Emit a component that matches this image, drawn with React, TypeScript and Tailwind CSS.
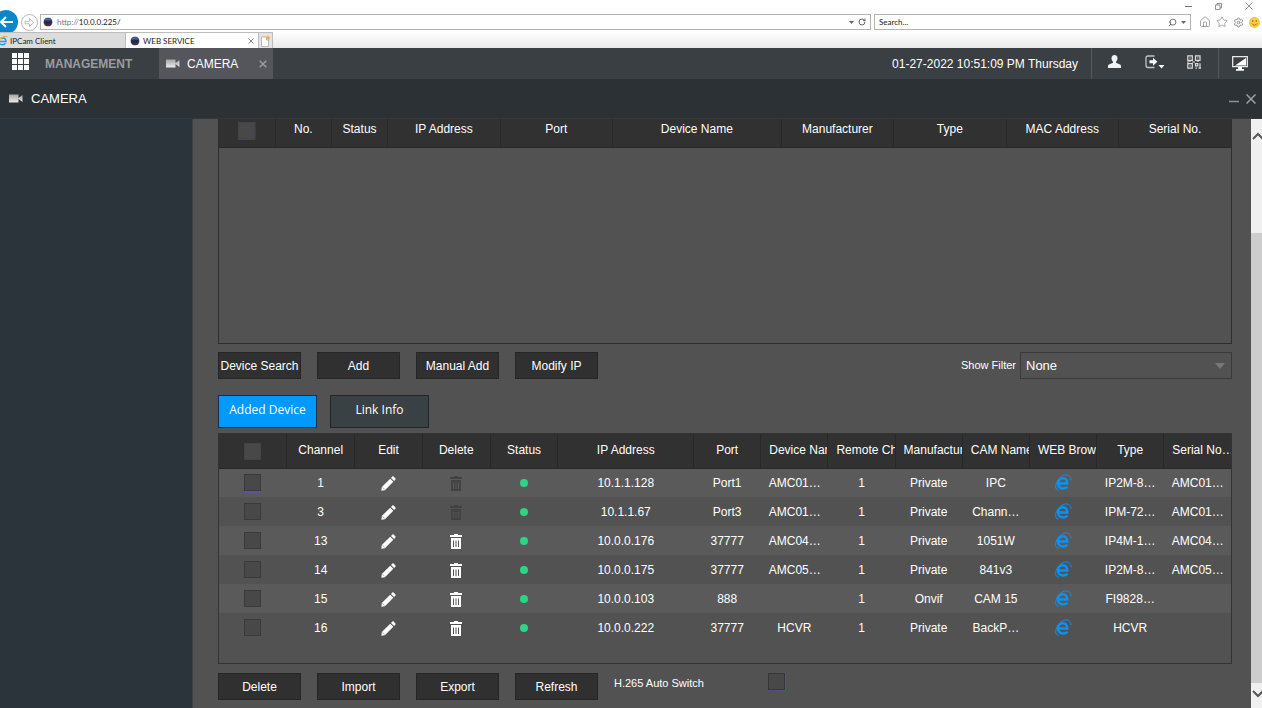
import type { ReactNode } from "react";
import { Home, RotateCw, Search, Settings, Star } from "lucide-react";

const searchColumns = [
  { label: "No.", width: "w-1/18" },
  { label: "Status", width: "w-1/18" },
  { label: "IP Address", width: "w-2/18" },
  { label: "Port", width: "w-2/18" },
  { label: "Device Name", width: "w-3/18" },
  { label: "Manufacturer", width: "w-2/18" },
  { label: "Type", width: "w-2/18" },
  { label: "MAC Address", width: "w-2/18" },
  { label: "Serial No.", width: "w-2/18" },
];

const addedColumns = [
  { label: "Channel", width: "w-[6.7%]" },
  { label: "Edit", width: "w-[6.7%]" },
  { label: "Delete", width: "w-[6.7%]" },
  { label: "Status", width: "w-[6.7%]" },
  { label: "IP Address", width: "w-[13.4%]" },
  { label: "Port", width: "" },
  { label: "Device Name", width: "" },
  { label: "Remote Channel", width: "" },
  { label: "Manufacturer", width: "" },
  { label: "CAM Name", width: "" },
  { label: "WEB Browser", width: "" },
  { label: "Type", width: "" },
  { label: "Serial No…", width: "" },
];

const devices = [
  { channel: 1, ip: "10.1.1.128", port: "Port1", name: "AMC01…", maker: "Private", cam: "IPC", type: "IP2M-8…", serial: "AMC01…", locked: true },
  { channel: 3, ip: "10.1.1.67", port: "Port3", name: "AMC01…", maker: "Private", cam: "Chann…", type: "IPM-72…", serial: "AMC01…", locked: true },
  { channel: 13, ip: "10.0.0.176", port: "37777", name: "AMC04…", maker: "Private", cam: "1051W", type: "IP4M-1…", serial: "AMC04…", locked: false },
  { channel: 14, ip: "10.0.0.175", port: "37777", name: "AMC05…", maker: "Private", cam: "841v3", type: "IP2M-8…", serial: "AMC05…", locked: false },
  { channel: 15, ip: "10.0.0.103", port: "888", name: "", maker: "Onvif", cam: "CAM 15", type: "FI9828…", serial: "", locked: false },
  { channel: 16, ip: "10.0.0.222", port: "37777", name: "HCVR", maker: "Private", cam: "BackP…", type: "HCVR", serial: "", locked: false },
];

function Globe() {
  return (
    <svg width="10" height="10" viewBox="0 0 10 10" className="shrink-0">
      <circle cx="5" cy="5" r="4.6" fill="#8d8f9c" />
      <circle cx="5" cy="5" r="4" fill="#232a52" />
      <path d="M1.4 3.6a4 4 0 0 1 7.2 0z" fill="#4a6a9a" />
      <path d="M1.6 6.8a4 4 0 0 0 6.8 0z" fill="#5d2630" />
    </svg>
  );
}

function ExplorerIcon() {
  return (
    <svg width="17" height="17" viewBox="0 0 17 17" fill="none" stroke="#0a93f5" className="inline-block">
      <path d="M3 9.500h9.300C12.300 6.200 10.500 4.300 8 4.300c-2.900 0-5 2.200-5 5.200s2.100 5 5.200 5c1.900 0 3.300-.6 4.300-1.700" strokeWidth="2.400" />
      <path d="M3.800 16C1.600 16.200.6 14.800.7 12.300.9 7.500 4.500 2.600 9.500 1.100c3.500-.9 6 1 6.800 5" strokeWidth="1" />
    </svg>
  );
}

function CameraIcon() {
  return (
    <svg width="14" height="9" viewBox="0 0 14 9" className="shrink-0">
      <defs>
        <linearGradient id="cam" x1="0" y1="0" x2="0" y2="1">
          <stop offset="0" stopColor="#a4a4a4" />
          <stop offset="1" stopColor="#ececec" />
        </linearGradient>
      </defs>
      <path d="M0 .5h9.500v8H0zM9.500 4l4-3v7l-4-3z" fill="url(#cam)" />
    </svg>
  );
}

function Pencil() {
  return (
    <svg width="15" height="15" viewBox="0 0 15 15" fill="#fff" className="inline-block">
      <path d="M.3 14.700l.5-3.600L9.200 2.700l3.100 3.100-8.400 8.400zM10 1.900l1.200-1.200c.5-.5 1.100-.5 1.600 0l1.500 1.500c.5.5.5 1.100 0 1.600l-1.200 1.200z" />
      <path d="M1.500 11.300l2.200 2.200" stroke="#777" strokeWidth=".6" />
    </svg>
  );
}

function Trash({ color }: { color: string }) {
  return (
    <svg width="12" height="15" viewBox="0 0 12 15" fill={color} className="inline-block">
      <path d="M4 0h4v1h4v2H0V1h4z" />
      <path fillRule="evenodd" d="M1 4h10v11H1zM3 6.500V13h1V6.500zm2.500 0V13h1V6.500zM8 6.500V13h1V6.500z" />
    </svg>
  );
}

function Caret({ className }: { className: string }) {
  return (
    <svg viewBox="0 0 10 6" fill="currentColor" className={className}>
      <path d="M0 0h10L5 6z" />
    </svg>
  );
}

function Check({ label, className = "" }: { label: string; className?: string }) {
  return (
    <input
      type="checkbox"
      aria-label={label}
      className={`inline-block size-[17px] appearance-none border bg-[#484848] align-middle checked:bg-[#0099ff] ${className}`}
    />
  );
}

function ActionButton({ children }: { children: ReactNode }) {
  return (
    <button className="h-[27px] w-[83px] border border-[#262626] bg-[#303030] pt-px text-center text-xs whitespace-nowrap text-white">
      {children}
    </button>
  );
}

function Cell({ children }: { children?: ReactNode }) {
  return <td className="overflow-hidden p-0 px-2 text-center whitespace-nowrap">{children}</td>;
}

function BrowserBar() {
  return (
    <header className="bg-white font-['Lato','Open_Sans',sans-serif] text-[8px] text-[#222]">
      <div className="flex h-3 items-center justify-end gap-[23px] pr-[9px] text-[#777]">
        <button aria-label="Minimize window">
          <svg width="7" height="7" viewBox="0 0 7 7" stroke="currentColor"><path d="M0 3.500h7" /></svg>
        </button>
        <button aria-label="Restore window">
          <svg width="7" height="7" viewBox="0 0 7 7" fill="none" stroke="currentColor" strokeWidth=".8"><path d="M.5 2h4.500v4.500H.5zM2 2V.5h4.500V5H5" /></svg>
        </button>
        <button aria-label="Close window">
          <svg width="8" height="8" viewBox="0 0 8 8" stroke="currentColor" strokeWidth=".8"><path d="M.5.5l7 7M7.500.5l-7 7" /></svg>
        </button>
      </div>

      <div className="flex h-5 items-center">
        <button aria-label="Back" className="h-6 w-[19px] shrink-0">
          <svg width="19" height="24" viewBox="0 0 19 24" fill="none">
            <circle cx="6" cy="12" r="12" fill="#0a86c9" />
            <path d="M13 12H1M6 7l-5 5 5 5" stroke="#fff" strokeWidth="2" />
          </svg>
        </button>
        <button aria-label="Forward" className="ml-[2px] shrink-0">
          <svg width="17" height="17" viewBox="0 0 17 17" fill="none" stroke="#b5b5b5">
            <circle cx="8.500" cy="8.500" r="8" />
            <path d="M4 7.200h4.500V4.500l4.200 4-4.200 4V9.800H4z" strokeWidth=".9" />
          </svg>
        </button>
        <div className="ml-[2px] flex h-4 flex-1 items-center border border-[#b4b4b4] pr-1 pl-[2px]">
          <Globe />
          <label htmlFor="address" className="ml-1 text-[#777]">http://</label>
          <input id="address" defaultValue="10.0.0.225/" className="min-w-0 flex-1 outline-none" />
          <Caret className="h-[3px] w-[5px] text-[#666]" />
          <button aria-label="Reload" className="ml-1">
            <RotateCw size={8} strokeWidth={3} color="#666" />
          </button>
        </div>
        <div className="ml-[3px] flex h-4 w-[317px] items-center border border-[#b4b4b4] pr-1 pl-1">
          <input aria-label="Search" placeholder="Search..." className="min-w-0 flex-1 outline-none placeholder:text-[#222]" />
          <Search size={9} strokeWidth={2.5} color="#666" className="-scale-x-100" />
          <Caret className="ml-1 h-[3px] w-[5px] text-[#666]" />
        </div>
        <div className="ml-[8px] flex items-center gap-[5px] pr-[2px] text-[#8a8a8a]">
          <button aria-label="Home"><Home size={12} strokeWidth={1.5} /></button>
          <button aria-label="Favorites"><Star size={12} strokeWidth={1.5} /></button>
          <button aria-label="Tools"><Settings size={11} strokeWidth={2} /></button>
          <button aria-label="Feedback">
            <svg width="11" height="11" viewBox="0 0 11 11" fill="none">
              <circle cx="5.500" cy="5.500" r="5" fill="#fbd13a" stroke="#d9a81e" strokeWidth=".6" />
              <path d="M3 6.500a2.700 2.700 0 0 0 5 0" stroke="#8a6510" strokeWidth=".8" />
              <circle cx="3.800" cy="4" r=".7" fill="#6e5010" />
              <circle cx="7.200" cy="4" r=".7" fill="#6e5010" />
            </svg>
          </button>
        </div>
      </div>

      <div className="flex h-4 items-stretch bg-linear-to-b from-white to-[#e9e9e9]">
        <button className="flex w-[126px] items-center gap-[2px] border-t border-r border-[#bdbdbd] bg-[#dcdcdc]">
          <svg width="8" height="10" viewBox="0 0 8 10" fill="none">
            <path d="M0 5.500h6C6 3.500 4.500 2 2.500 2S0 3 0 3M0 8c2 1.300 4.500.8 5.500-.8" stroke="#2b9ae0" strokeWidth="1.500" />
            <path d="M0 3C3 .5 6.500-.2 7.300 1" stroke="#e8b32a" strokeWidth="1.200" />
          </svg>
          IPCam Client
        </button>
        <div className="flex w-[132px] items-center border-t border-[#bdbdbd] bg-white pr-1 pl-1">
          <Globe />
          <span className="ml-[3px] flex-1">WEB SERVICE</span>
          <button aria-label="Close tab">
            <svg width="6" height="6" viewBox="0 0 6 6" stroke="#888"><path d="M.5.5l5 5M5.500.5l-5 5" /></svg>
          </button>
        </div>
        <button aria-label="New tab" className="flex w-[15px] items-center justify-center border border-b-0 border-[#bdbdbd] bg-[#e4e4e4]">
          <svg width="11" height="12" viewBox="0 0 11 12" fill="none">
            <path d="M1.500 2h5v3h2v6.500h-7z" fill="#fff" stroke="#aaa" strokeWidth=".8" />
            <path d="M8 0l.8 1.700 1.900.3-1.400 1.300.3 1.900L8 4.300l-1.600.9.3-1.900L5.300 2l1.900-.3z" fill="#f0ae3c" />
          </svg>
        </button>
      </div>
    </header>
  );
}

function NavBar() {
  return (
    <nav className="flex h-[31px] items-stretch bg-[#3a3f43] text-xs text-white">
      <button aria-label="Main menu" className="pb-1 pl-3">
        <svg width="17" height="17" viewBox="0 0 17 17" fill="#fff">
          <path d="M0 0h5v5H0zM6 0h5v5H6zM12 0h5v5h-5zM0 6h5v5H0zM6 6h5v5H6zM12 6h5v5h-5zM0 12h5v5H0zM6 12h5v5H6zM12 12h5v5h-5z" />
        </svg>
      </button>
      <button className="ml-4 w-[114px] text-left font-bold text-[#9a9da0]">MANAGEMENT</button>
      <div className="flex w-[114px] items-center bg-[#55565b] pr-[6px] pl-[7px]">
        <CameraIcon />
        <span className="ml-[7px] flex-1">CAMERA</span>
        <button aria-label="Close CAMERA">
          <svg width="8" height="8" viewBox="0 0 8 8" stroke="#9b9b9b" strokeWidth="1.500"><path d="M.7.7l6.600 6.600M7.300.7L.7 7.300" /></svg>
        </button>
      </div>
      <div className="ml-auto flex items-center pr-[13px]">01-27-2022 10:51:09 PM Thursday</div>
      <div className="flex w-[127px] items-center border-l border-[#55595c] pb-1 pl-4">
        <button aria-label="User">
          <svg width="13" height="13" viewBox="0 0 13 13" fill="#f2f2f2">
            <path d="M6.500 0C8.500 0 9.500 1.500 9.500 3.300c0 1.500-.6 2.700-1.500 3.500v1l4 1.700c.6.3 1 .8 1 1.500v2H0v-2c0-.7.400-1.200 1-1.500l4-1.700v-1C4.100 6 3.500 4.800 3.500 3.300 3.500 1.500 4.500 0 6.500 0z" />
          </svg>
        </button>
        <button aria-label="Log out" className="ml-6">
          <svg width="20" height="14" viewBox="0 0 20 14" fill="none">
            <path d="M9.500 1H3Q1 1 1 3v7.500q0 2 2 2h6.500" stroke="#c4c4c4" strokeWidth="1.300" />
            <path d="M4.500 5.300H8V2.800l4.300 4L8 10.800V8.300H4.500z" fill="#fff" />
            <path d="M13.500 10h6l-3 3.500z" fill="#fff" />
          </svg>
        </button>
        <button aria-label="QR code" className="ml-[22px]">
          <svg width="14" height="14" viewBox="0 0 14 14" fill="none" stroke="#dcdcdc" strokeWidth="1.200">
            <path d="M.8.8h4.500v4.500H.8zM8.500.8H13v4.500H8.500zM.8 8.700h4.500v4.500H.8zM8.500 8.700h2.300v2.200H8.500zM13 8.200v5M8.500 13.200h1.500M11.500 13.200H14M2.500 3h1.200M10.200 3h1.200M2.500 11h1.200M3 5v2M11 5v2M0 7h2M5 7h3" />
          </svg>
        </button>
      </div>
      <div className="flex w-11 items-center border-l border-[#55595c] pb-px pl-[13px]">
        <button aria-label="Display">
          <svg width="16" height="15" viewBox="0 0 16 15" fill="none">
            <path d="M.7.7h14.600v10H.7z" stroke="#e8e8e8" strokeWidth="1.300" />
            <path d="M14 2v7.500H3z" fill="#fff" />
            <path d="M6 11h4v2h2v1.700H4V13h2z" fill="#fff" />
          </svg>
        </button>
      </div>
    </nav>
  );
}

function SearchTable() {
  return (
    <div className="min-h-[225px] border border-t-0 border-[#2e2e2e]">
      <table className="w-full table-fixed border-collapse text-xs">
        <thead>
          <tr className="h-7 border-b border-[#28282c] bg-[#313131]">
            <th className="w-1/18 border-r border-[#282828] p-0 pb-1 leading-none">
              <Check label="Select all found devices" className="border-[#444] shadow-[1px_0_0_#2f4444,0_1px_0_#46407a]" />
            </th>
            {searchColumns.map((col) => (
              <th key={col.label} className={`${col.width} border-r border-[#282828] p-0 pb-2 font-normal last:border-r-0`}>
                {col.label}
              </th>
            ))}
          </tr>
        </thead>
      </table>
    </div>
  );
}

function AddedTable() {
  return (
    <div className="min-h-[231px] border border-[#333]">
      <table className="w-full table-fixed border-collapse text-xs">
        <thead>
          <tr className="h-[34px] border-b border-[#282828] bg-[#313131]">
            <th className="w-[6.7%] border-r border-[#282828] p-0 pt-px leading-none">
              <Check label="Select all added devices" className="border-[#444]" />
            </th>
            {addedColumns.map((col) => (
              <th
                key={col.label}
                className={`${col.width} overflow-hidden border-r border-[#282828] p-0 px-2 pb-[2px] font-normal whitespace-nowrap last:border-r-0`}
              >
                {col.label}
              </th>
            ))}
          </tr>
        </thead>
        <tbody>
          {devices.map((d, i) => (
            <tr key={d.channel} className="h-[29px] odd:bg-[#5a5a5a]">
              <td className="p-0 text-center leading-none">
                <Check
                  label={`Select channel ${d.channel}`}
                  className={i === 0 ? "border-[#3a3a3a] shadow-[0_2px_0_#5d529c]" : "border-[#3a3a3a]"}
                />
              </td>
              <Cell>{d.channel}</Cell>
              <Cell>
                <button aria-label={`Edit channel ${d.channel}`} className="block w-full">
                  <Pencil />
                </button>
              </Cell>
              <Cell>
                <button aria-label={`Delete channel ${d.channel}`} disabled={d.locked} className="block w-full">
                  <Trash color={d.locked ? "#424242" : "#fff"} />
                </button>
              </Cell>
              <Cell>
                <span className="inline-block size-2 rounded-full bg-[#2bd584]" />
              </Cell>
              <Cell>{d.ip}</Cell>
              <Cell>{d.port}</Cell>
              <Cell>{d.name}</Cell>
              <Cell>1</Cell>
              <Cell>{d.maker}</Cell>
              <Cell>{d.cam}</Cell>
              <Cell>
                <a href={`http://${d.ip}/`} aria-label={`Open ${d.ip}`} className="block">
                  <ExplorerIcon />
                </a>
              </Cell>
              <Cell>{d.type}</Cell>
              <Cell>{d.serial}</Cell>
            </tr>
          ))}
        </tbody>
      </table>
    </div>
  );
}

function ScrollBar() {
  return (
    <div className="flex w-[11px] shrink-0 flex-col overflow-hidden bg-[#f0f0f0] text-[#555]">
      <svg width="11" height="34" viewBox="0 0 11 34" fill="none" stroke="currentColor" strokeWidth="2">
        <path d="M2 20l5-5 5 5" />
      </svg>
      <div className="mt-20 flex-1 bg-[#cdcdcd]" />
      <svg width="11" height="25" viewBox="0 0 11 25" fill="none" stroke="currentColor" strokeWidth="2">
        <path d="M2 8l5 5 5-5" />
      </svg>
    </div>
  );
}

export default function App() {
  return (
    <div className="flex min-h-screen flex-col overflow-hidden bg-[#525252] font-['Liberation_Sans',Arial,sans-serif] text-white">
      <BrowserBar />
      <NavBar />
      <div className="flex h-10 items-center border-b border-[#34383c] bg-[#2c3135] pr-[6px] pl-[9px]">
        <CameraIcon />
        <h1 className="ml-2 flex-1 text-[13px]">CAMERA</h1>
        <button aria-label="Minimize" className="mr-[7px]">
          <svg width="10" height="10" viewBox="0 0 10 10" stroke="#909090" strokeWidth="1.500"><path d="M0 7.500h10" /></svg>
        </button>
        <button aria-label="Close">
          <svg width="10" height="10" viewBox="0 0 10 10" stroke="#a0a0a0" strokeWidth="1.500"><path d="M.5.5l9 9M9.500.5l-9 9" /></svg>
        </button>
      </div>

      <div className="flex flex-1">
        <aside className="w-[193px] shrink-0 border-r border-[#3c4247] bg-[#2b333b]" />
        <main className="min-w-0 flex-1 pr-[19px] pb-2 pl-[25px]">
          <SearchTable />
          <div className="mt-2 flex items-center gap-4">
            <ActionButton>Device Search</ActionButton>
            <ActionButton>Add</ActionButton>
            <ActionButton>Manual Add</ActionButton>
            <ActionButton>Modify IP</ActionButton>
            <label htmlFor="filter" className="-mr-3 ml-auto text-[11px]">Show Filter</label>
            <div className="relative w-[212px]">
              <select id="filter" className="h-[27px] w-full appearance-none border border-[#3a3a3a] bg-[#525252] pl-[5px] text-[13px] outline-none">
                <option>None</option>
              </select>
              <Caret className="pointer-events-none absolute top-[11px] right-[7px] h-[6px] w-[10px] text-[#777]" />
            </div>
          </div>

          <div className="mt-4 mb-[5px] flex gap-[13px] font-['Open_Sans','Noto_Sans',sans-serif] text-xs">
            <button className="h-[33px] w-[99px] border border-[#14304a] bg-[#0099ff] pb-1">Added Device</button>
            <button className="h-[33px] w-[99px] border border-[#20262a] bg-[#394145] pb-1">Link Info</button>
          </div>
          <AddedTable />

          <div className="mt-[9px] flex items-start gap-4">
            <ActionButton>Delete</ActionButton>
            <ActionButton>Import</ActionButton>
            <ActionButton>Export</ActionButton>
            <ActionButton>Refresh</ActionButton>
            <label htmlFor="h265" className="w-[138px] pt-[2px] text-[11px]">H.265 Auto Switch</label>
            <input
              id="h265"
              type="checkbox"
              className="size-[17px] appearance-none border border-[#363636] bg-[#484848] shadow-[1px_0_0_#2f6e6e,0_1px_0_#57507a] checked:bg-[#0099ff]"
            />
          </div>
        </main>
        <ScrollBar />
      </div>
    </div>
  );
}
